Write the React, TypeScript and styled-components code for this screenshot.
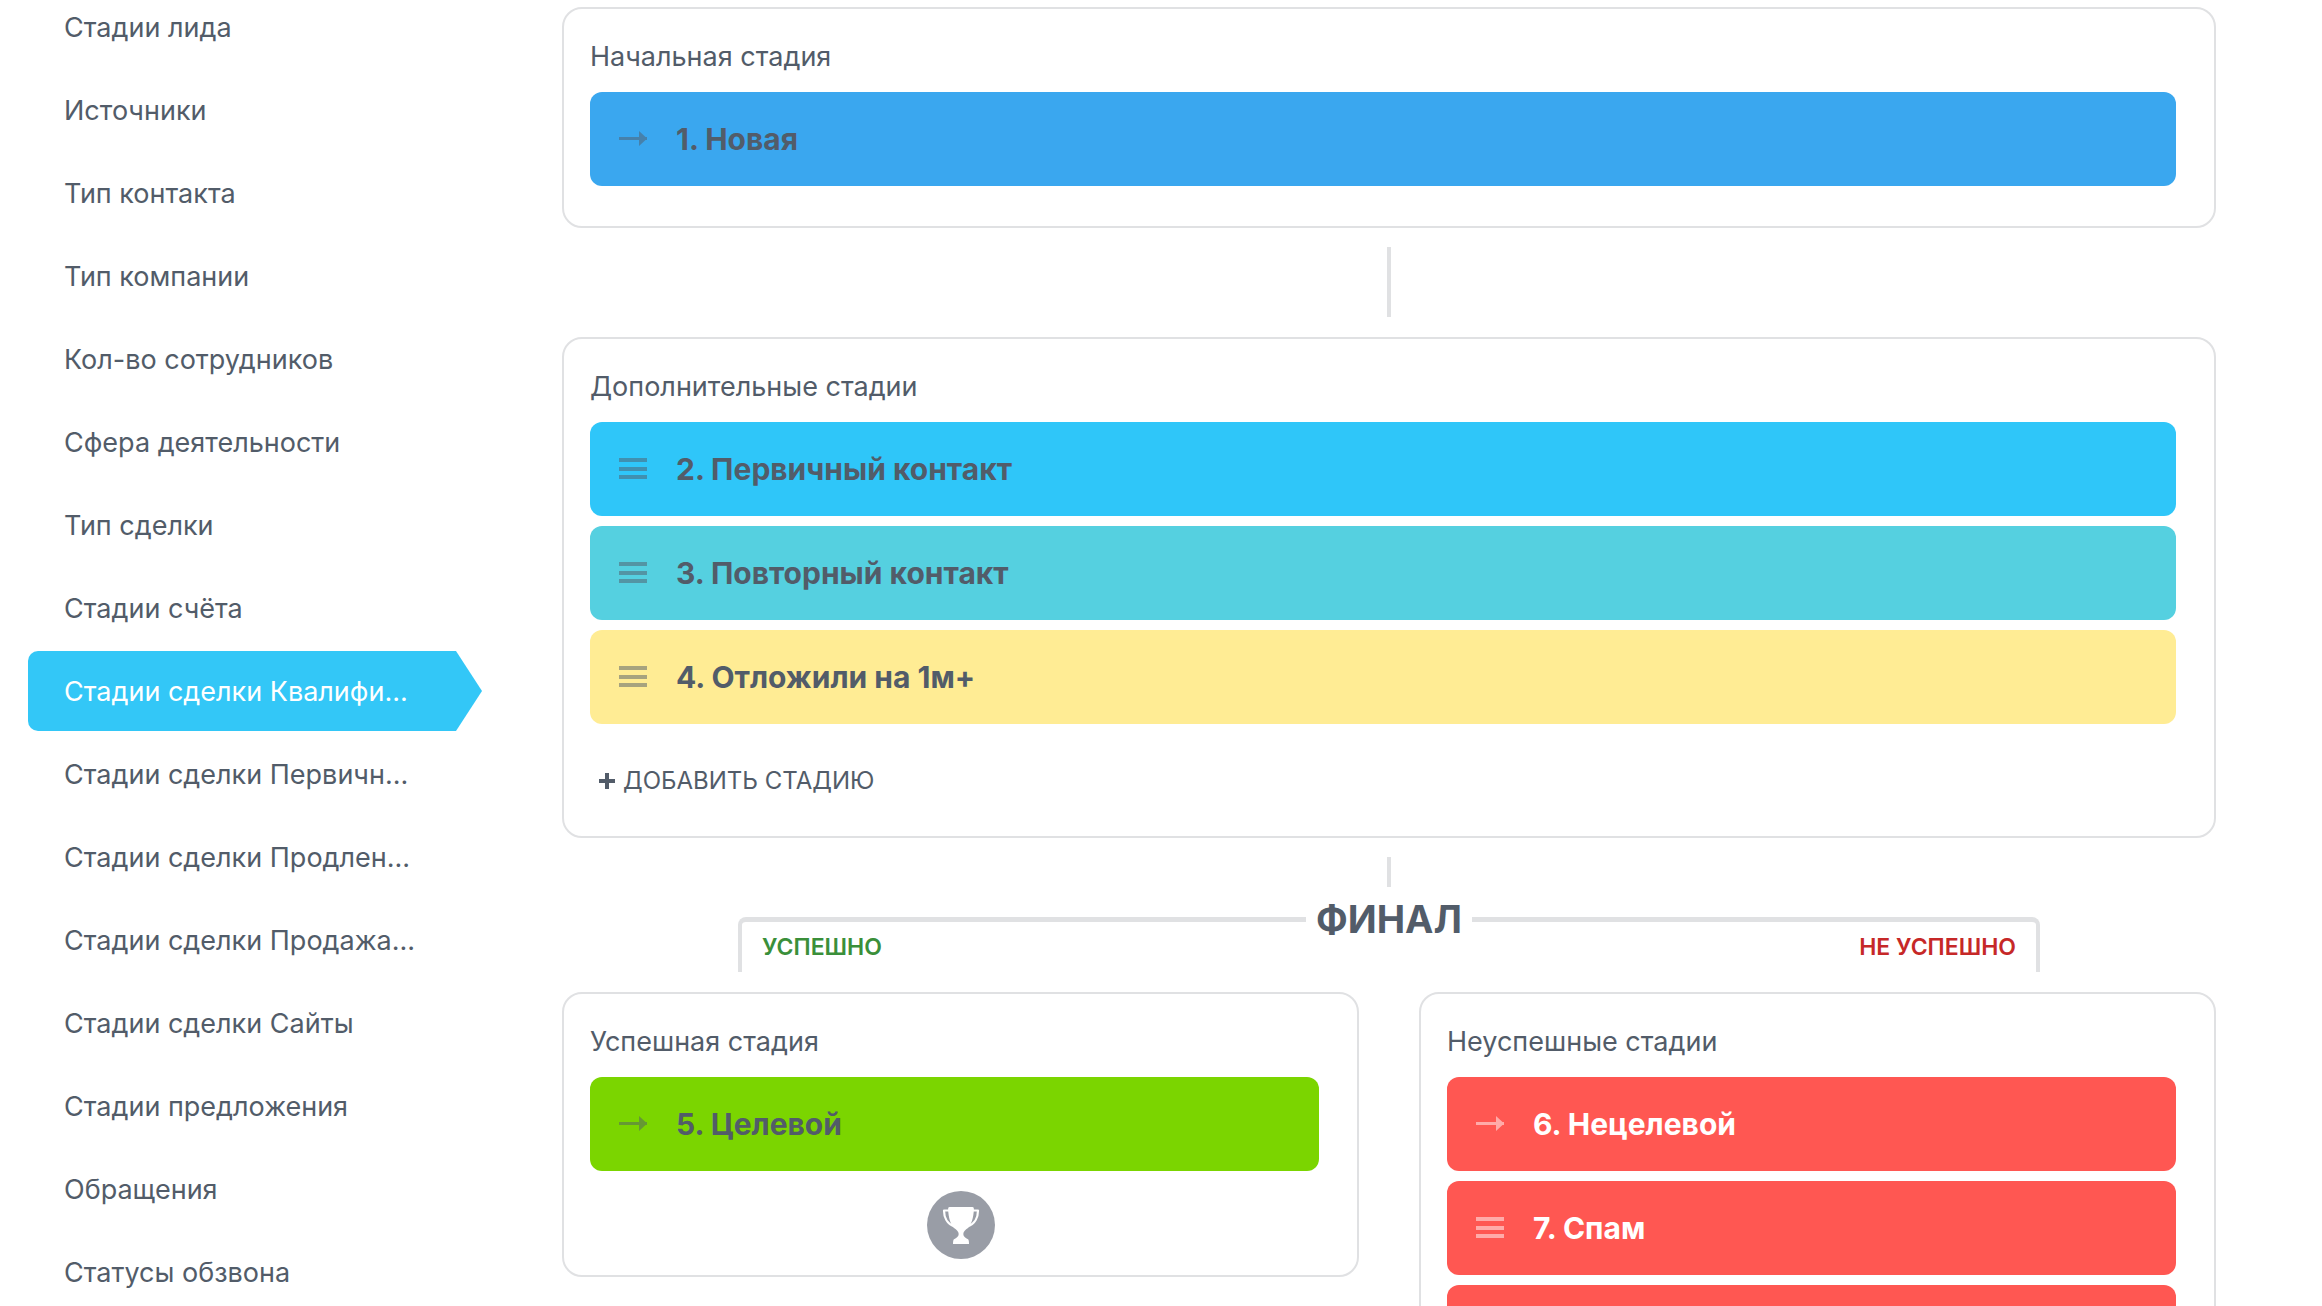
import React from "react";
import styled, { createGlobalStyle } from "styled-components";

const INK = "#525c69";
const LINE = "#e0e1e3";

const GlobalStyle = createGlobalStyle`
  *, *::before, *::after { box-sizing: border-box; }
  body {
    margin: 0;
    background: #fff;
    color: ${INK};
    font-family: Inter, "Liberation Sans", sans-serif;
  }
`;

const Page = styled.div`
  display: flex;
  gap: 80px;
  height: 100vh;
  overflow: hidden;
  padding: 0 106px 0 28px;
`;

const Menu = styled.nav`
  display: flex;
  flex: 0 0 454px;
  flex-direction: column;
  gap: 3px;
  margin-top: -13px;
`;

const MenuLink = styled.a<{ $active: boolean }>`
  flex: none;
  padding: 2px 48px 0 36px;
  border-radius: 10px;
  background: ${(p) => (p.$active ? "#33c7f7" : "transparent")};
  color: ${(p) => (p.$active ? "#fff" : INK)};
  clip-path: polygon(0 0, calc(100% - 26px) 0, 100% 50%, calc(100% - 26px) 100%, 0 100%);
  font-size: 27px;
  line-height: 78px;
  text-decoration: none;
  white-space: nowrap;
`;

const Main = styled.main`
  display: flex;
  flex: 1;
  flex-direction: column;
  min-width: 0;
  padding-top: 7px;
`;

const Card = styled.section<{ $bottom?: number }>`
  flex: none;
  padding: 30px 0 ${(p) => p.$bottom ?? 40}px;
  border: 2px solid ${LINE};
  border-radius: 20px;
`;

const CardTitle = styled.h2`
  margin: 0 26px 17px;
  font-size: 27px;
  font-weight: 400;
  line-height: 36px;
`;

const StageList = styled.ul`
  display: flex;
  flex-direction: column;
  gap: 10px;
  margin: 0 38px 0 26px;
  padding: 0;
  list-style: none;
`;

const StageRow = styled.li<{ $color: string; $light?: boolean }>`
  display: flex;
  align-items: center;
  gap: 29px;
  height: 94px;
  padding: 0 29px;
  border-radius: 12px;
  background: ${(p) => p.$color};
  color: ${(p) => (p.$light ? "#fff" : INK)};
  font-size: 30px;
  font-weight: 700;
  line-height: 36px;
`;

const Glyph = styled.svg`
  flex: none;
  opacity: 0.5;
`;

const AddButton = styled.button`
  display: flex;
  align-items: center;
  gap: 8px;
  margin: 42px 35px 0;
  padding: 0;
  border: 0;
  background: none;
  color: ${INK};
  font-family: inherit;
  font-size: 24px;
  line-height: 30px;
  text-transform: uppercase;
  cursor: pointer;
`;

const Connector = styled.div<{ $length: number; $after: number }>`
  flex: none;
  align-self: center;
  width: 4px;
  height: ${(p) => p.$length}px;
  margin: 19px 0 ${(p) => p.$after}px;
  background: ${LINE};
`;

const FinalHead = styled.div`
  display: grid;
  flex: none;
  grid-template-columns: 1fr auto 1fr;
  align-items: start;
  margin: 0 176px 20px;
`;

const FinalTitle = styled.h2`
  margin: 0;
  padding: 0 10px;
  font-size: 38px;
  font-weight: 700;
  line-height: 44px;
`;

const Branch = styled.div<{ $side: "left" | "right" }>`
  height: 55px;
  margin-top: 20px;
  padding: 12px 20px 0;
  border-top: 5px solid ${LINE};
  border-${(p) => p.$side}: 4px solid ${LINE};
  border-top-${(p) => p.$side}-radius: 8px;
  color: ${(p) => (p.$side === "left" ? "#3a8f3a" : "#c62828")};
  font-size: 23px;
  font-weight: 600;
  line-height: 26px;
  text-align: ${(p) => p.$side};
`;

const Outcomes = styled.div`
  display: grid;
  flex: none;
  grid-template-columns: 1fr 1fr;
  align-items: start;
  gap: 60px;
`;

const Trophy = styled.svg`
  display: block;
  margin: 20px auto 0;
`;

type Stage = { name: string; color: string; fixed?: boolean; light?: boolean };

const MENU = [
  "Стадии лида",
  "Источники",
  "Тип контакта",
  "Тип компании",
  "Кол-во сотрудников",
  "Сфера деятельности",
  "Тип сделки",
  "Стадии счёта",
  "Стадии сделки Квалифи...",
  "Стадии сделки Первичн...",
  "Стадии сделки Продлен...",
  "Стадии сделки Продажа...",
  "Стадии сделки Сайты",
  "Стадии предложения",
  "Обращения",
  "Статусы обзвона",
];
const ACTIVE = 8;

const INITIAL: Stage[] = [{ name: "1. Новая", color: "#3aa7ef", fixed: true }];
const EXTRA: Stage[] = [
  { name: "2. Первичный контакт", color: "#2fc6f9" },
  { name: "3. Повторный контакт", color: "#55d0e0" },
  { name: "4. Отложили на 1м+", color: "#ffec94" },
];
const WON: Stage[] = [{ name: "5. Целевой", color: "#7bd500", fixed: true }];
const LOST: Stage[] = [
  { name: "6. Нецелевой", color: "#ff5752", fixed: true, light: true },
  { name: "7. Спам", color: "#ff5752", light: true },
  { name: "", color: "#ff5752", light: true },
];

function ArrowGlyph() {
  return (
    <Glyph width="28" height="22" viewBox="0 0 28 22" fill="currentColor" aria-hidden="true">
      <path d="M0 9H20V3L26.500 9H28V12H26.500L20 18V12H0Z" />
    </Glyph>
  );
}

function DragGlyph() {
  return (
    <Glyph width="28" height="22" viewBox="0 0 28 22" fill="currentColor" aria-hidden="true">
      <path d="M0 0H28V4H0ZM0 9H28V13H0ZM0 17H28V21H0Z" />
    </Glyph>
  );
}

function Stages({ items }: { items: Stage[] }) {
  return (
    <StageList>
      {items.map((s, i) => (
        <StageRow key={i} $color={s.color} $light={s.light}>
          {s.fixed ? <ArrowGlyph /> : <DragGlyph />}
          {s.name}
        </StageRow>
      ))}
    </StageList>
  );
}

export default function App() {
  return (
    <>
      <GlobalStyle />
      <Page>
        <Menu>
          {MENU.map((label, i) => (
            <MenuLink key={label} href="#" $active={i === ACTIVE}>
              {label}
            </MenuLink>
          ))}
        </Menu>
        <Main>
          <Card>
            <CardTitle>Начальная стадия</CardTitle>
            <Stages items={INITIAL} />
          </Card>
          <Connector $length={70} $after={20} />
          <Card>
            <CardTitle>Дополнительные стадии</CardTitle>
            <Stages items={EXTRA} />
            <AddButton type="button">
              <svg width="16" height="16" viewBox="0 0 16 16" fill="currentColor" aria-hidden="true">
                <path d="M6 0H10V6H16V10H10V16H6V10H0V6H6Z" />
              </svg>
              Добавить стадию
            </AddButton>
          </Card>
          <Connector $length={30} $after={10} />
          <FinalHead>
            <Branch $side="left">УСПЕШНО</Branch>
            <FinalTitle>ФИНАЛ</FinalTitle>
            <Branch $side="right">НЕ УСПЕШНО</Branch>
          </FinalHead>
          <Outcomes>
            <Card $bottom={16}>
              <CardTitle>Успешная стадия</CardTitle>
              <Stages items={WON} />
              <Trophy width="68" height="68" viewBox="0 0 68 68" aria-hidden="true">
                <circle cx="34" cy="34" r="34" fill="#999da6" />
                <path
                  fill="#fff"
                  d="M22.500 16H45.500Q47 16 46.900 18C46.500 27 44.500 33.500 41 37C38.500 38.800 36.300 40.500 36.300 43C36.300 45.500 38.500 46.800 41 48.300Q42 49 42 53H26Q26 49 27 48.300C29.500 46.800 31.700 45.500 31.700 43C31.700 40.500 29.500 38.800 27 37C23.500 33.500 21.500 27 21.100 18Q21 16 22.500 16Z"
                />
                <path
                  fill="none"
                  stroke="#fff"
                  strokeWidth="2.200"
                  strokeLinejoin="round"
                  d="M22.500 19.500H17C17 25.500 19.500 33 27.500 35.500M45.500 19.500H51C51 25.500 48.500 33 40.500 35.500"
                />
              </Trophy>
            </Card>
            <Card>
              <CardTitle>Неуспешные стадии</CardTitle>
              <Stages items={LOST} />
            </Card>
          </Outcomes>
        </Main>
      </Page>
    </>
  );
}
